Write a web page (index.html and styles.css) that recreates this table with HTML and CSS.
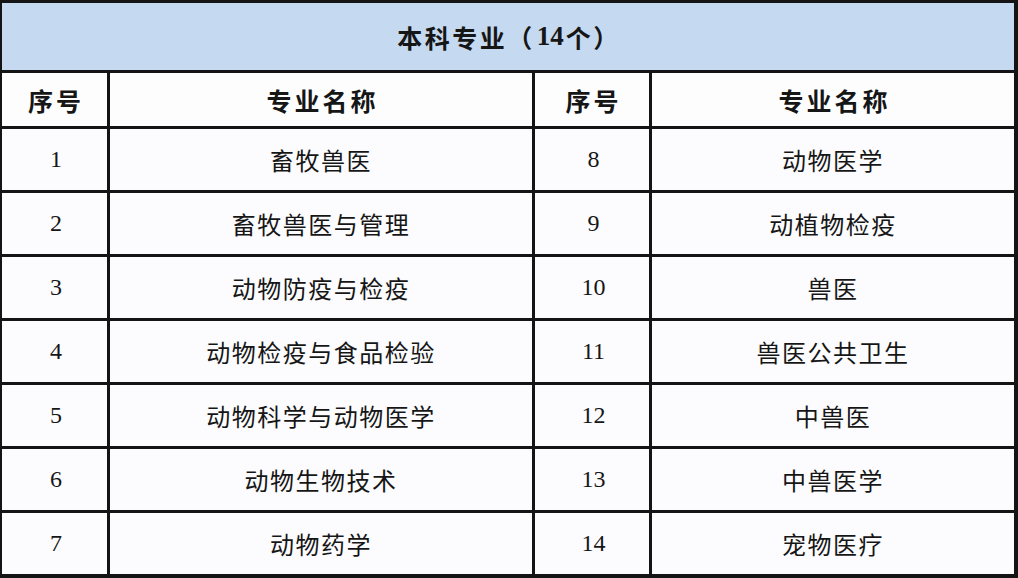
FILE: index.html
```html
<!DOCTYPE html>
<html lang="zh-CN">
<head>
<meta charset="utf-8">
<title>本科专业</title>
<link rel="stylesheet" href="styles.css">
</head>
<body>
<div class="table">
  <div class="title">本科专业（<span class="num">14</span>个）</div>
  <div class="head">序号</div>
  <div class="head">专业名称</div>
  <div class="head">序号</div>
  <div class="head">专业名称</div>

  <div class="cell num">1</div><div class="cell">畜牧兽医</div><div class="cell num">8</div><div class="cell">动物医学</div>
  <div class="cell num">2</div><div class="cell">畜牧兽医与管理</div><div class="cell num">9</div><div class="cell">动植物检疫</div>
  <div class="cell num">3</div><div class="cell">动物防疫与检疫</div><div class="cell num">10</div><div class="cell">兽医</div>
  <div class="cell num">4</div><div class="cell">动物检疫与食品检验</div><div class="cell num">11</div><div class="cell">兽医公共卫生</div>
  <div class="cell num">5</div><div class="cell">动物科学与动物医学</div><div class="cell num">12</div><div class="cell">中兽医</div>
  <div class="cell num">6</div><div class="cell">动物生物技术</div><div class="cell num">13</div><div class="cell">中兽医学</div>
  <div class="cell num">7</div><div class="cell">动物药学</div><div class="cell num">14</div><div class="cell">宠物医疗</div>
</div>
</body>
</html>
```

FILE: styles.css
```css
html, body {
  margin: 0;
  padding: 0;
  background: #ffffff;
}

.table {
  width: 1018px;
  height: 578px;
  box-sizing: border-box;
  display: grid;
  grid-template-columns: 105px 422px 114px 362px;
  grid-template-rows: 67px 53px repeat(7, 61px);
  gap: 3px;
  padding: 3px 4px 4px 2px;
  background: #141414;
  font-family: "Noto Sans CJK SC", "Noto Sans", sans-serif;
  color: #161616;
}

.title {
  grid-column: 1 / -1;
  background: #c5d9f0;
  display: flex;
  align-items: center;
  justify-content: center;
  font-weight: 700;
  font-size: 25px;
  letter-spacing: 2.5px;
  padding-left: 2px;
}

.title .num {
  font-family: "Liberation Serif", serif;
  font-weight: 700;
  font-size: 27px;
  letter-spacing: 0;
  padding: 0 2px;
}

.head {
  background: #fdfdfe;
  display: flex;
  align-items: center;
  justify-content: center;
  font-weight: 700;
  font-size: 25px;
  letter-spacing: 3px;
  padding-left: 3px;
}

.cell {
  background: #fcfcfe;
  display: flex;
  align-items: center;
  justify-content: center;
  font-size: 24px;
  letter-spacing: 1.5px;
}

.cell.num {
  font-family: "Liberation Serif", serif;
  font-size: 24px;
  letter-spacing: 0;
  padding-left: 3px;
}
```
